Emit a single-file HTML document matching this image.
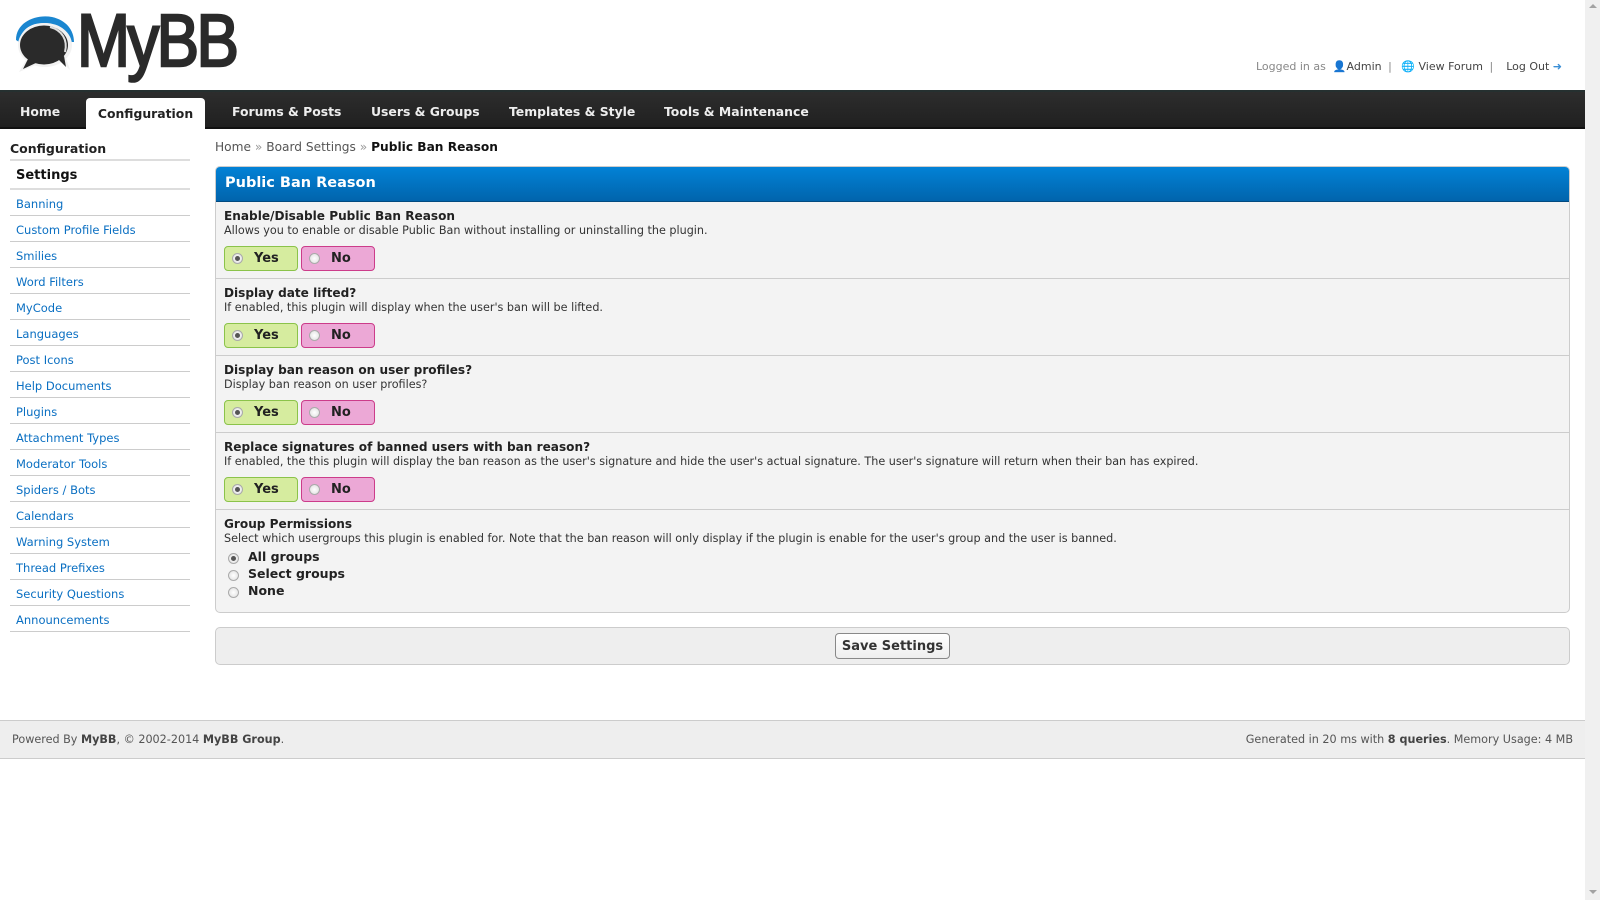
<!DOCTYPE html>
<html><head><meta charset="utf-8">
<style>
*{box-sizing:border-box}
html,body{margin:0;padding:0;background:#fff}
body{font-family:"DejaVu Sans","Liberation Sans",sans-serif;font-size:11px;color:#333;width:1600px;height:900px;overflow:hidden;position:relative}
.sb{position:absolute;left:1585px;top:0;width:15px;height:900px;background:#f0f0f0}
.sb:before{content:"";position:absolute;left:4px;top:4px;border:4px solid transparent;border-bottom:4px solid #a3a3a3;border-top:0}
.sb:after{content:"";position:absolute;left:4px;bottom:6px;border:4px solid transparent;border-top:4px solid #a3a3a3;border-bottom:0}
.wrap{position:absolute;left:0;top:0;width:1585px;height:900px}
.logo{position:absolute;left:14px;top:14px}
.logotext{position:absolute;left:77px;top:-2px;font-family:"Liberation Sans",sans-serif;font-size:74px;color:#2a2a2a;letter-spacing:-3px;transform:scaleX(.86);transform-origin:left top;white-space:nowrap;-webkit-text-stroke:2.5px #2a2a2a}
.user{position:absolute;right:23px;top:60px;font-size:11px;color:#444;white-space:nowrap}
.user .g{color:#888}
.user span.sep{color:#888;margin:0 6px 0 3px}
.nav{position:absolute;left:0;top:90px;width:1585px;height:39px;background:linear-gradient(#2d2d2d,#202020);border-top:2px solid #253030;border-bottom:2px solid #111}
.nav a{position:absolute;top:12px;color:#eee;font-weight:bold;font-size:12.4px;text-decoration:none;white-space:nowrap}
.nav .act{top:6px;left:86px;width:119px;height:33px;background:#fff;border-radius:4px 4px 0 0;color:#222;padding-top:8px;text-align:center}
.side{position:absolute;left:10px;top:138px;width:180px}
.side h3{margin:0;font-size:12.5px;color:#222;height:23px;padding-top:3px;border-bottom:2px solid #ddd}
.side div{height:26px;border-bottom:1px solid #ccc;padding:7px 0 0 6px;color:#0a6fc2;font-size:11.5px}
.side div.set{font-weight:bold;color:#111;font-size:13px;padding-top:7px;height:29px;border-bottom:2px solid #ddd}
.crumb{position:absolute;left:215px;top:140px;font-size:12.2px;color:#555}
.crumb b{color:#111}
.crumb i{font-style:normal;color:#999}
.panel{position:absolute;left:215px;top:166px;width:1355px;height:447px;border:1px solid #ccc;border-radius:5px;background:#f3f3f3;overflow:hidden}
.ph{height:35px;background:linear-gradient(#0282d6,#0164ac);color:#fff;font-weight:bold;font-size:14.5px;padding:8px 0 0 9px;border-bottom:1px solid #024a80}
.row{height:77px;border-bottom:1px solid #ccc;padding:7px 0 0 8px}
.row .t,.gp .t{font-weight:bold;font-size:12.1px;color:#222}
.row .d,.gp .d{font-size:11.2px;color:#333;margin-top:1px}
.yn{margin-top:9px;height:25px}
.yn span{display:inline-block;width:74px;height:25px;border-radius:4px;font-weight:bold;font-size:13px;color:#222;position:relative;padding:4px 0 0 29px;margin-right:3px}
.yes{background:#d6ec9f;border:1px solid #8bc34a}
.no{background:#eca8d6;border:1px solid #cc3c8a}
.rd{position:absolute;left:7px;top:6px;width:11px;height:11px;border-radius:50%;background:radial-gradient(#fff,#ddd);border:1px solid #aaa}
.rd.on:after{content:"";position:absolute;left:2px;top:2px;width:5px;height:5px;border-radius:50%;background:#555}
.gp{padding:7px 0 0 8px}
.opt{position:relative;height:17px;padding-left:24px;font-weight:bold;font-size:12.5px;color:#222}
.opt .rd{left:4px;top:4px}
.save{position:absolute;left:215px;top:627px;width:1355px;height:38px;border:1px solid #ccc;border-radius:5px;background:#eee}
.btn{position:absolute;left:619px;top:5px;width:115px;height:26px;border:1px solid #888;border-radius:4px;background:linear-gradient(#fff,#eee);font-weight:bold;font-size:13px;color:#333;text-align:center;padding-top:5px}
.foot{position:absolute;left:0;top:720px;width:1585px;height:39px;background:#eee;border-top:1px solid #ccc;border-bottom:1px solid #ccc;font-size:11.2px;color:#555;padding:12px 12px 0 12px}
.foot b{color:#444}
.foot .r{position:absolute;right:12px;top:12px}
</style></head><body>
<div class="wrap">
<svg class="logo" width="62" height="60" viewBox="0 0 62 60">
<path d="M2 26 C2 8 22 0 38 3 C52 6 60 16 60 28 L54 28 C52 16 42 9 30 9 C16 9 7 16 5 28 Z" fill="#1a86d0"/>
<ellipse cx="31" cy="31" rx="27" ry="22" fill="#f2f2f2"/>
<path d="M12 46 L5 58 L24 50 Z" fill="#f2f2f2"/>
<path d="M46 46 L56 56 L52 44 Z" fill="#f2f2f2"/>
<ellipse cx="30" cy="31" rx="24" ry="19.5" fill="#2a2a2a"/>
<path d="M14 45 L9 55 L24 48 Z" fill="#2a2a2a"/>
<path d="M44 45 L52 53 L50 42 Z" fill="#2a2a2a"/>
<path d="M36 13 C48 16 54 26 51 38" stroke="#ddd" stroke-width="2" fill="none"/>
</svg>
<div class="logotext">MyBB</div>
<div class="user"><span class="g">Logged in as &nbsp;</span><span style="color:#4a7bb0">&#128100;</span>Admin<span class="sep"> |</span> <span style="color:#2a80c8">&#127760;</span> View Forum<span class="sep"> |</span> &nbsp;Log Out <span style="color:#3b8fd6;font-weight:bold">&#10140;</span></div>
<div class="nav">
<a style="left:20px">Home</a>
<a class="act">Configuration</a>
<a style="left:232px">Forums &amp; Posts</a>
<a style="left:371px">Users &amp; Groups</a>
<a style="left:509px">Templates &amp; Style</a>
<a style="left:664px">Tools &amp; Maintenance</a>
</div>
<div class="side">
<h3>Configuration</h3>
<div class="set">Settings</div>
<div>Banning</div><div>Custom Profile Fields</div><div>Smilies</div><div>Word Filters</div><div>MyCode</div><div>Languages</div><div>Post Icons</div><div>Help Documents</div><div>Plugins</div><div>Attachment Types</div><div>Moderator Tools</div><div>Spiders / Bots</div><div>Calendars</div><div>Warning System</div><div>Thread Prefixes</div><div>Security Questions</div><div>Announcements</div>
</div>
<div class="crumb">Home <i>»</i> Board Settings <i>»</i> <b>Public Ban Reason</b></div>
<div class="panel">
<div class="ph">Public Ban Reason</div>
<div class="row"><div class="t">Enable/Disable Public Ban Reason</div><div class="d">Allows you to enable or disable Public Ban without installing or uninstalling the plugin.</div><div class="yn"><span class="yes"><i class="rd on"></i>Yes</span><span class="no"><i class="rd"></i>No</span></div></div>
<div class="row"><div class="t">Display date lifted?</div><div class="d">If enabled, this plugin will display when the user's ban will be lifted.</div><div class="yn"><span class="yes"><i class="rd on"></i>Yes</span><span class="no"><i class="rd"></i>No</span></div></div>
<div class="row"><div class="t">Display ban reason on user profiles?</div><div class="d">Display ban reason on user profiles?</div><div class="yn"><span class="yes"><i class="rd on"></i>Yes</span><span class="no"><i class="rd"></i>No</span></div></div>
<div class="row"><div class="t">Replace signatures of banned users with ban reason?</div><div class="d">If enabled, the this plugin will display the ban reason as the user's signature and hide the user's actual signature. The user's signature will return when their ban has expired.</div><div class="yn"><span class="yes"><i class="rd on"></i>Yes</span><span class="no"><i class="rd"></i>No</span></div></div>
<div class="gp"><div class="t">Group Permissions</div><div class="d">Select which usergroups this plugin is enabled for. Note that the ban reason will only display if the plugin is enable for the user's group and the user is banned.</div>
<div style="margin-top:4px"><div class="opt"><i class="rd on"></i>All groups</div><div class="opt"><i class="rd"></i>Select groups</div><div class="opt"><i class="rd"></i>None</div></div></div>
</div>
<div class="save"><div class="btn">Save Settings</div></div>
<div class="foot">Powered By <b>MyBB</b>, © 2002-2014 <b>MyBB Group</b>.<span class="r">Generated in 20 ms with <b>8 queries</b>. Memory Usage: 4 MB</span></div>
</div>
<div class="sb"></div>
</body></html>
